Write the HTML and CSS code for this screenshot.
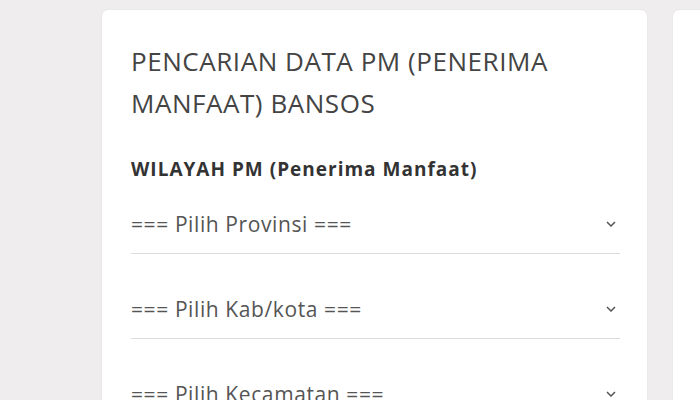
FILE: index.html
```html
<!DOCTYPE html>
<html lang="id">

<head>
  <meta charset="UTF-8">
  <meta name="viewport" content="width=device-width, initial-scale=1.0">
  <title>Cek Bansos</title>
  <link rel="stylesheet" href="styles.css">
</head>

<body>
  <div class="page">
    <div class="card">
      <h2 class="title">PENCARIAN DATA PM (PENERIMA MANFAAT) BANSOS</h2>
      <div class="label">WILAYAH PM (Penerima Manfaat)</div>

      <div class="select">
        <span>=== Pilih Provinsi ===</span>
        <svg class="chevron" width="10" height="6" viewBox="0 0 10 6"><path d="M1 1l4 4 4-4" /></svg>
      </div>
      <div class="select">
        <span>=== Pilih Kab/kota ===</span>
        <svg class="chevron" width="10" height="6" viewBox="0 0 10 6"><path d="M1 1l4 4 4-4" /></svg>
      </div>
      <div class="select">
        <span>=== Pilih Kecamatan ===</span>
        <svg class="chevron" width="10" height="6" viewBox="0 0 10 6"><path d="M1 1l4 4 4-4" /></svg>
      </div>
    </div>
    <div class="card card-side"></div>
  </div>
</body>

</html>
```

FILE: styles.css
```css
body {
  font-family: 'Open Sans', 'Noto Sans', sans-serif;
  margin: 0;
  padding: 0;
  height: 400px;
  overflow: hidden;
  background: #efeded;
}

.page {
  display: flex;
  gap: 26px;
  padding: 10px 0 0 102px;
}

.card {
  flex: none;
  width: 545px;
  height: 500px;
  background: #ffffff;
  border-radius: 6px;
  box-shadow: 0 0 2px rgba(0, 0, 0, 0.08);
  padding: 30px 27px 0 29px;
  box-sizing: border-box;
}

.card-side {
  width: 300px;
}

.title {
  margin: 0 0 32px;
  font-size: 26px;
  line-height: 42px;
  letter-spacing: 0.55px;
  font-weight: 400;
  color: #444;
}

.label {
  font-size: 19px;
  line-height: 27px;
  letter-spacing: 1px;
  font-weight: 700;
  color: #333;
  margin-bottom: 15px;
}

.select {
  display: flex;
  align-items: center;
  justify-content: space-between;
  height: 56px;
  padding-bottom: 3px;
  box-sizing: border-box;
  border-bottom: 1px solid #dcdcdc;
  margin-bottom: 29px;
  font-size: 21px;
  letter-spacing: 0.6px;
  color: #555;
}

.chevron {
  margin-right: 4px;
  fill: none;
  stroke: #555;
  stroke-width: 1.5;
}
```
